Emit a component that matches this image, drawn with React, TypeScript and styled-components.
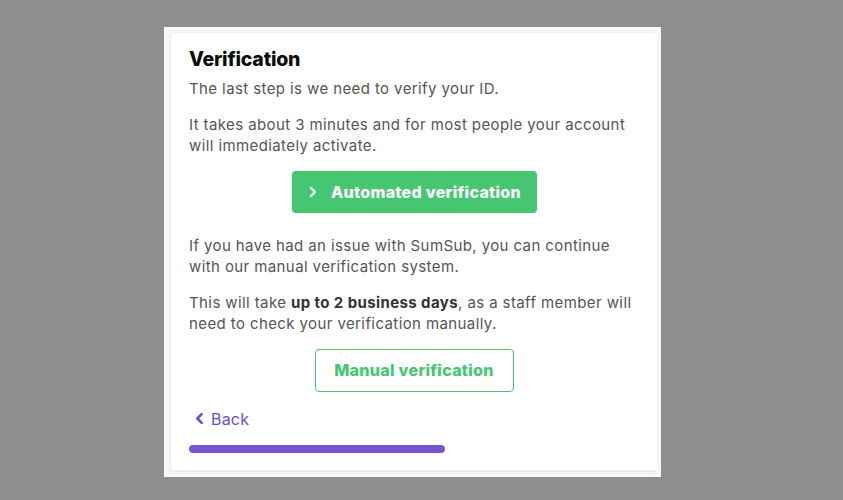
import styled, { createGlobalStyle } from 'styled-components';

const GlobalStyle = createGlobalStyle`
  html, body {
    margin: 0;
    padding: 0;
    background: #8e8e8e;
  }
  body {
    font-family: Inter, "Noto Sans", sans-serif;
  }
`;

const Stage = styled.div`
  height: 500px;
  display: flex;
  justify-content: center;
  padding-top: 27px;
  box-sizing: border-box;
`;

const Panel = styled.div`
  width: 497px;
  height: 450px;
  box-sizing: border-box;
  background: #f7f7f7;
  padding: 6px 4px 7px 7px;
  margin-left: -18px;
`;

const Card = styled.div`
  height: 100%;
  box-sizing: border-box;
  background: #fff;
  border-radius: 4px;
  box-shadow: 0 1px 4px rgba(0, 0, 0, 0.08);
  padding: 14px 18px 0;
  display: flex;
  flex-direction: column;
`;

const Title = styled.h2`
  margin: 0 0 7px;
  font-family: Inter, sans-serif;
  font-weight: 800;
  font-size: 19.5px;
  line-height: 24px;
  letter-spacing: -0.2px;
  color: #0d0d0d;
`;

const Text = styled.p`
  margin: 0 0 14px;
  font-size: 15px;
  line-height: 21.5px;
  color: #555;
  letter-spacing: 0.4px;

  strong {
    font-weight: 700;
    color: #333;
  }
`;

const ButtonRow = styled.div<{ $gap: number }>`
  display: flex;
  justify-content: center;
  margin: 0 0 ${(p) => p.$gap}px;
`;

const PrimaryButton = styled.button`
  display: flex;
  align-items: center;
  justify-content: center;
  gap: 12px;
  width: 245px;
  height: 42px;
  border: none;
  border-radius: 4px;
  background: #47c672;
  color: #fff;
  font-family: Inter, sans-serif;
  font-weight: 800;
  font-size: 16px;
  letter-spacing: 0.3px;
  cursor: pointer;
`;

const OutlineButton = styled.button`
  width: 199px;
  height: 43px;
  border: 1px solid #47c672;
  border-radius: 4px;
  background: #fff;
  color: #47c672;
  font-family: Inter, sans-serif;
  font-weight: 800;
  font-size: 16px;
  letter-spacing: 0.3px;
  cursor: pointer;
`;

const BackLink = styled.a`
  display: flex;
  align-items: center;
  gap: 5px;
  color: #6a4fc9;
  font-size: 16px;
  letter-spacing: 0.2px;
  margin: 0 0 16px 4px;
  cursor: pointer;
`;

const Progress = styled.div`
  width: 256px;
  height: 8px;
  border-radius: 4px;
  background: #7755d1;
`;

const Chevron = ({ dir, color, size }: { dir: 'left' | 'right'; color: string; size: number }) => (
  <svg width={size} height={size} viewBox="0 0 12 12" fill="none">
    <path
      d={dir === 'right' ? 'M4 2l4 4-4 4' : 'M8 2L4 6l4 4'}
      stroke={color}
      strokeWidth="2.4"
      strokeLinecap="round"
      strokeLinejoin="round"
    />
  </svg>
);

export default function App() {
  return (
    <>
      <GlobalStyle />
      <Stage>
        <Panel>
          <Card>
            <Title>Verification</Title>
            <Text>The last step is we need to verify your ID.</Text>
            <Text>
              It takes about 3 minutes and for most people your account will
              immediately activate.
            </Text>
            <ButtonRow $gap={22}>
              <PrimaryButton>
                <Chevron dir="right" color="#fff" size={12} />
                Automated verification
              </PrimaryButton>
            </ButtonRow>
            <Text>
              If you have had an issue with SumSub, you can continue with our
              manual verification system.
            </Text>
            <Text>
              This will take <strong>up to 2 business days</strong>, as a staff
              member will need to check your verification manually.
            </Text>
            <ButtonRow $gap={17}>
              <OutlineButton>Manual verification</OutlineButton>
            </ButtonRow>
            <BackLink>
              <Chevron dir="left" color="#6a4fc9" size={13} />
              Back
            </BackLink>
            <Progress />
          </Card>
        </Panel>
      </Stage>
    </>
  );
}
